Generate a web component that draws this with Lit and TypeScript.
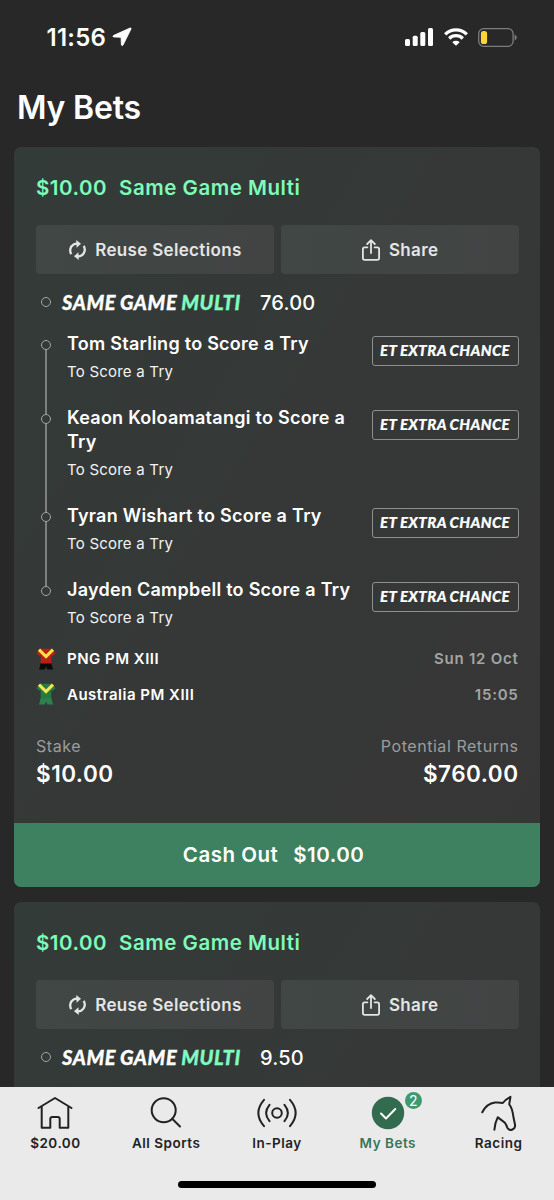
import { LitElement, html, css, svg, nothing } from "lit";
import { customElement, property } from "lit/decorators.js";

interface Leg {
  title: string;
  market: string;
}

interface Team {
  name: string;
  shirt: string;
  collar: string;
  shorts: string;
  when: string;
}

interface Bet {
  stake: string;
  odds: string;
  returns: string;
  legs: Leg[];
  teams: Team[];
}

const MARKET = "To Score a Try";

const BETS: Bet[] = [
  {
    stake: "$10.00",
    odds: "76.00",
    returns: "$760.00",
    legs: [
      { title: "Tom Starling to Score a Try", market: MARKET },
      { title: "Keaon Koloamatangi to Score a Try", market: MARKET },
      { title: "Tyran Wishart to Score a Try", market: MARKET },
      { title: "Jayden Campbell to Score a Try", market: MARKET },
    ],
    teams: [
      { name: "PNG PM XIII", shirt: "#b81f17", collar: "#fbe04a", shorts: "#0b0b0b", when: "Sun 12 Oct" },
      { name: "Australia PM XIII", shirt: "#257a43", collar: "#f4e64e", shorts: "#2f8050", when: "15:05" },
    ],
  },
  { stake: "$10.00", odds: "9.50", returns: "", legs: [], teams: [] },
];

const reuseIcon = html`<svg width="17" height="20" viewBox="0 0 17 20" fill="none">
  <path d="M2.300 14.200C.2 10.600 1.300 6.300 4.600 4.400 5.700 3.800 7 3.500 8.300 3.600" stroke="#e4e5e5" stroke-width="2.300" />
  <path d="M7.200 0 12 3.700 7.600 7.700Z" fill="#e4e5e5" />
  <path d="M14.700 5.800C16.800 9.400 15.700 13.700 12.400 15.600 11.300 16.200 10 16.500 8.700 16.400" stroke="#e4e5e5" stroke-width="2.300" />
  <path d="M9.800 20 5 16.300 9.400 12.300Z" fill="#e4e5e5" />
</svg>`;

const shareIcon = html`<svg width="18" height="22" viewBox="0 0 18 22" fill="none" stroke="#e4e5e5" stroke-width="1.800" stroke-linejoin="round" stroke-linecap="round">
  <path d="M5.400 8.300H2.800Q.9 8.300.9 10.200V19Q.9 20.900 2.800 20.900H15.200Q17.100 20.900 17.100 19V10.200Q17.100 8.300 15.200 8.300H12.600" />
  <path d="M9 14V1.600M5.200 5 9 1.200 12.800 5" />
</svg>`;

const kit = (t: Team) => html`<svg width="20" height="22" viewBox="0 0 20 22">
  <path d="M4.700 15H15.300L17.100 21.600H11.300L10 18.600 8.700 21.600H3Z" fill=${t.shorts} />
  <path d="M4 .8H16L19.600 5.300 16.600 7.800 15.300 6.900V15.500H4.700V6.900L3.400 7.800.4 5.300Z" fill=${t.shirt} />
  <path d="M3 1.700 10 8.600 17 1.700" fill="none" stroke=${t.collar} stroke-width="3.200" />
</svg>`;

@customElement("status-bar")
class StatusBar extends LitElement {
  static styles = css`
    :host {
      display: flex;
      align-items: center;
      height: 74px;
      padding: 0 37px 0 46.500px;
      color: #fff;
    }
    .time {
      font-size: 24px;
      font-weight: 600;
      letter-spacing: 0.25px;
    }
    .arrow {
      margin-left: 6px;
    }
    .icons {
      margin-left: auto;
      display: flex;
      align-items: center;
      gap: 10.500px;
    }
    svg {
      display: block;
    }
  `;
  render() {
    return html`
      <span class="time">11:56</span>
      <svg class="arrow" width="20" height="20" viewBox="0 0 20 20">
        <path d="M18.200 1 1.400 8.600Q.3 9.300 1.500 9.900L9.100 10.200 9.400 17.900Q10.200 19.400 11 18L19 1.900Q19.200.6 18.200 1Z" fill="#fff" stroke="#fff" stroke-width=".9" stroke-linejoin="round" />
      </svg>
      <div class="icons">
        <svg width="28" height="18" viewBox="0 0 28 18" fill="#fff">
          <rect x="0" y="11" width="5" height="7" rx="1.500" />
          <rect x="7.700" y="7.800" width="5" height="10.200" rx="1.500" />
          <rect x="15.300" y="4" width="5" height="14" rx="1.500" />
          <rect x="23" y="0" width="5" height="18" rx="1.500" />
        </svg>
        <svg width="24" height="18" viewBox="0 0 24 18" fill="none" stroke="#fff" stroke-width="3.200">
          <path d="M1.200 6.300A15.300 15.300 0 0 1 22.800 6.300" />
          <path d="M5.200 10.500A9.600 9.600 0 0 1 18.800 10.500" />
          <path d="M8.300 14.200A5.400 5.400 0 0 1 15.700 14.200L12 17.800Z" fill="#fff" stroke="none" />
        </svg>
        <svg width="39" height="19" viewBox="0 0 39 19">
          <rect x=".7" y=".7" width="34.400" height="17.600" rx="5" fill="none" stroke="#7d7d7d" stroke-width="1.300" />
          <path d="M36.600 6.500Q38.800 7.600 38.800 9.500T36.600 12.500Z" fill="#7d7d7d" />
          <rect x="2.900" y="2.900" width="6.200" height="13.200" rx="2.600" fill="#fbd535" />
        </svg>
      </div>
    `;
  }
}

@customElement("bet-card")
class BetCard extends LitElement {
  @property({ attribute: false }) bet!: Bet;

  static styles = css`
    :host {
      display: block;
      flex: none;
      min-height: 740px;
      border-radius: 7px;
      overflow: hidden;
      background: linear-gradient(122deg, #333b38 0%, #353837 50%, #373636 100%);
      color: #fff;
    }
    svg {
      display: block;
      flex: none;
    }
    .body {
      padding: 26px 21.500px 0 22px;
    }
    .head {
      display: flex;
      gap: 12px;
      height: 30px;
      line-height: 29px;
      color: #7ffbb9;
      font-size: 20.500px;
      font-weight: 600;
      letter-spacing: 0.52px;
    }
    .actions {
      display: grid;
      grid-template-columns: 1fr 1fr;
      gap: 7px;
      margin-top: 22px;
    }
    .action {
      display: flex;
      align-items: center;
      justify-content: center;
      gap: 9px;
      height: 49px;
      border-radius: 4px;
      background: linear-gradient(100deg, #404745, #424444);
      color: #e4e5e5;
      font-size: 17px;
      font-weight: 600;
      letter-spacing: 0.33px;
      padding-left: 1px;
    }
    .dot {
      box-sizing: border-box;
      flex: none;
      width: 10px;
      height: 10px;
      border: 1.500px solid #a3a7a5;
      border-radius: 50%;
    }
    .price {
      display: flex;
      align-items: center;
      height: 58px;
      padding-left: 5px;
    }
    .price .dot {
      margin-bottom: 2px;
    }
    .brand {
      margin: 0 0 3px 11px;
      width: 180px;
      font-family: Lato, sans-serif;
      font-size: 20px;
      font-weight: 900;
      font-style: italic;
      letter-spacing: 0.6px;
      word-spacing: -1px;
      -webkit-text-stroke: 0.3px currentColor;
      white-space: nowrap;
    }
    .brand .multi {
      color: #7ffbc0;
    }
    .odds {
      margin-left: 18px;
      font-size: 20px;
      font-weight: 500;
      letter-spacing: 0.2px;
    }
    .leg {
      display: grid;
      grid-template-columns: 20px 1fr auto;
      column-gap: 11px;
    }
    .rail {
      display: flex;
      flex-direction: column;
      align-items: center;
    }
    .line {
      width: 2px;
      background: #7c817f;
      flex: 1;
    }
    .line.lead {
      flex: none;
      height: 8px;
    }
    .line.off {
      background: none;
    }
    .text {
      padding-bottom: 24px;
      margin-right: -6px;
    }
    .text.last {
      padding-bottom: 13px;
    }
    .title {
      font-size: 18px;
      line-height: 24px;
      font-weight: 600;
      letter-spacing: 0.26px;
    }
    .market {
      margin-top: 6px;
      font-size: 15px;
      line-height: 20px;
      height: 20px;
      color: #f2f3f3;
      letter-spacing: 0.22px;
    }
    .chance {
      box-sizing: border-box;
      width: 147px;
      height: 30px;
      margin-top: 4px;
      border: 1.500px solid #8d908f;
      border-radius: 3px;
      font-family: Lato, sans-serif;
      font-size: 15px;
      line-height: 27px;
      font-weight: 900;
      font-style: italic;
      text-align: center;
      white-space: nowrap;
      letter-spacing: 0.4px;
      word-spacing: -0.5px;
      -webkit-text-stroke: 0.2px currentColor;
    }
    .team {
      display: grid;
      grid-template-columns: 20px 1fr auto;
      column-gap: 11px;
      align-items: center;
      height: 35.500px;
      font-size: 15px;
      font-weight: 600;
      letter-spacing: 0.5px;
    }
    .when {
      color: #a3a5a4;
      letter-spacing: 0.75px;
    }
    .totals {
      display: flex;
      justify-content: space-between;
      margin-top: 24px;
      height: 87px;
    }
    .total:last-child {
      text-align: right;
    }
    .label {
      font-size: 16px;
      line-height: 20px;
      color: #9b9d9c;
      letter-spacing: 0.55px;
    }
    .amount {
      margin-top: 4px;
      font-size: 22.500px;
      line-height: 28px;
      font-weight: 600;
      letter-spacing: 0.5px;
    }
    .cash {
      display: flex;
      align-items: center;
      justify-content: center;
      gap: 15px;
      box-sizing: border-box;
      height: 64px;
      padding: 0 7px 1px 0;
      background: #3e8161;
      font-size: 20.500px;
      font-weight: 600;
      letter-spacing: 0.5px;
    }
  `;

  render() {
    const b = this.bet;
    const last = b.legs.length - 1;
    return html`
      <div class="body">
        <div class="head"><span>${b.stake}</span><span>Same Game Multi</span></div>
        <div class="actions">
          <div class="action">${reuseIcon}<span>Reuse Selections</span></div>
          <div class="action">${shareIcon}<span>Share</span></div>
        </div>
        <div class="price">
          <span class="dot"></span>
          <span class="brand">SAME GAME <span class="multi">MULTI</span></span>
          <span class="odds">${b.odds}</span>
        </div>
        ${b.legs.map(
          (leg, i) => html`<div class="leg">
            <div class="rail">
              <span class="line lead ${i === 0 ? "off" : ""}"></span>
              <span class="dot"></span>
              <span class="line ${i === last ? "off" : ""}"></span>
            </div>
            <div class="text ${i === last ? "last" : ""}">
              <div class="title">${leg.title}</div>
              <div class="market">${leg.market}</div>
            </div>
            <div class="chance">ET EXTRA CHANCE</div>
          </div>`
        )}
        ${b.teams.map(
          (t) => html`<div class="team">${kit(t)}<span>${t.name}</span><span class="when">${t.when}</span></div>`
        )}
        ${b.returns
          ? html`<div class="totals">
              <div class="total"><div class="label">Stake</div><div class="amount">${b.stake}</div></div>
              <div class="total"><div class="label">Potential Returns</div><div class="amount">${b.returns}</div></div>
            </div>`
          : nothing}
      </div>
      ${b.returns ? html`<div class="cash"><span>Cash Out</span><span>${b.stake}</span></div>` : nothing}
    `;
  }
}

const NAV = [
  {
    label: "$20.00",
    icon: svg`<path d="M1.500 13 18 3 34.500 13M4.700 11.300V32.800H13.300V24Q13.300 22 15.300 22H20.700Q22.700 22 22.700 24V32.800H31.300V11.300" />`,
  },
  {
    label: "All Sports",
    icon: svg`<circle cx="15.700" cy="15.300" r="12" /><path d="M24.200 23.800 32 31.500" />`,
  },
  {
    label: "In-Play",
    icon: svg`<circle cx="18" cy="18" r="4.800" />
      <path d="M5 4.800Q-6.300 18 5 31.200M31 4.800Q42.300 18 31 31.200M10.500 9.800Q3.700 18 10.500 26.200M25.500 9.800Q32.300 18 25.500 26.200" />`,
  },
  {
    label: "My Bets",
    active: true,
    badge: "2",
    icon: svg`<circle cx="18" cy="18" r="16.200" fill="#336b4f" stroke="none" />
      <path d="M11 18.500 16 23.500 25.300 14" stroke="#fff" />`,
  },
  {
    label: "Racing",
    icon: svg`<path d="M1.300 17.300C4.500 11 8.500 8.300 14 7.600 17 7.200 19.500 7.500 21.800 8 23.500 5.500 26.500 3.500 29.500 1.900L28.200 9.300C31 12.500 32 18 32.500 22.500L34 29.500C34.700 34.500 29 36.700 26.500 33L25 29.500C24 26.500 20 25.500 16.800 22.300 14.500 26.500 13.700 30.500 13.400 34.800" />`,
  },
];

@customElement("nav-bar")
class NavBar extends LitElement {
  static styles = css`
    :host {
      display: block;
      height: 113px;
      background: #eaeaea;
      color: #222;
    }
    .tabs {
      display: grid;
      grid-template-columns: repeat(5, 1fr);
      height: 94px;
    }
    .tab {
      display: flex;
      flex-direction: column;
      align-items: center;
      padding-top: 8px;
      font-size: 13.500px;
      line-height: 18px;
      font-weight: 600;
      letter-spacing: 0.5px;
    }
    .active {
      color: #387657;
    }
    .icon {
      position: relative;
      margin-bottom: 3px;
    }
    svg {
      display: block;
      overflow: visible;
    }
    .badge {
      position: absolute;
      left: 35px;
      top: -3px;
      width: 17px;
      height: 17px;
      border-radius: 50%;
      background: #3f9970;
      color: #fff;
      font-size: 14px;
      line-height: 17px;
      font-weight: 400;
      letter-spacing: 0;
      text-align: center;
    }
    .home {
      width: 198px;
      height: 7px;
      margin: 0 auto;
      border-radius: 4px;
      background: #000;
    }
  `;
  render() {
    return html`
      <div class="tabs">
        ${NAV.map(
          (n) => html`<div class="tab ${n.active ? "active" : ""}">
            <div class="icon">
              <svg width="36" height="36" viewBox="0 0 36 36" fill="none" stroke="#222" stroke-width="2" stroke-linejoin="round" stroke-linecap="round">${n.icon}</svg>
              ${n.badge ? html`<span class="badge">${n.badge}</span>` : nothing}
            </div>
            <span>${n.label}</span>
          </div>`
        )}
      </div>
      <div class="home"></div>
    `;
  }
}

@customElement("app-root")
class AppRoot extends LitElement {
  static styles = css`
    :host {
      display: flex;
      flex-direction: column;
      height: 1200px;
      overflow: hidden;
      background: #282828;
      font-family: Inter, "Liberation Sans", sans-serif;
    }
    status-bar,
    nav-bar {
      flex: none;
    }
    .heading {
      margin: 0;
      padding: 12px 17px 0;
      height: 61px;
      line-height: 44px;
      font-size: 32px;
      font-weight: 600;
      letter-spacing: -0.2px;
      color: #fff;
    }
    .bets {
      flex: 1;
      min-height: 0;
      overflow: hidden;
      display: flex;
      flex-direction: column;
      gap: 15px;
      padding: 0 14px;
    }
  `;
  render() {
    return html`
      <status-bar></status-bar>
      <h1 class="heading">My Bets</h1>
      <div class="bets">${BETS.map((b) => html`<bet-card .bet=${b}></bet-card>`)}</div>
      <nav-bar></nav-bar>
    `;
  }
}
